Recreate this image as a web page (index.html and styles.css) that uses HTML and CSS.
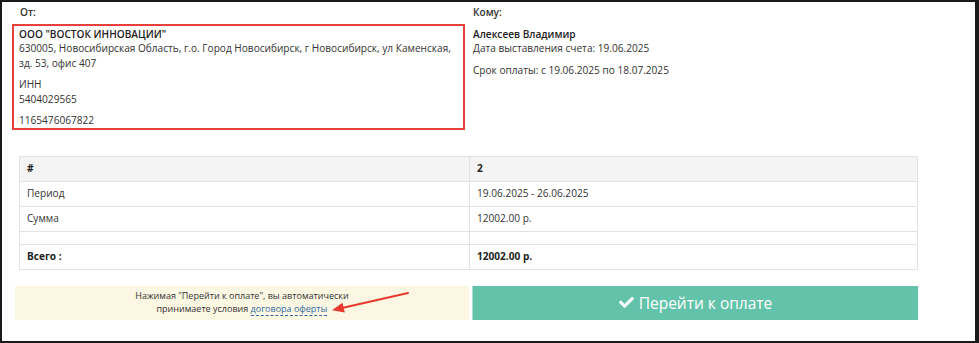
FILE: index.html
```html
<!DOCTYPE html>
<html lang="ru">
<head>
<meta charset="utf-8">
<title>Счет</title>
<link rel="stylesheet" href="styles.css">
</head>
<body>
<div class="frame">
  <div class="parties">
    <div class="party">
      <div class="label">От:</div>
      <div class="from-box">
        <div class="name">ООО "ВОСТОК ИННОВАЦИИ"</div>
        <p>630005, Новосибирская Область, г.о. Город Новосибирск, г Новосибирск, ул Каменская, зд. 53, офис 407</p>
        <p>ИНН<br>5404029565</p>
        <p class="last">1165476067822</p>
      </div>
    </div>
    <div class="party">
      <div class="label">Кому:</div>
      <div class="to-box">
        <div class="name">Алексеев Владимир</div>
        <p>Дата выставления счета: 19.06.2025</p>
        <p>Срок оплаты: с 19.06.2025 по 18.07.2025</p>
      </div>
    </div>
  </div>

  <table class="items">
    <tr class="head"><th>#</th><th>2</th></tr>
    <tr><td>Период</td><td>19.06.2025 - 26.06.2025</td></tr>
    <tr><td>Сумма</td><td>12002.00 р.</td></tr>
    <tr class="spacer"><td></td><td></td></tr>
    <tr class="total"><td>Всего :</td><td>12002.00 р.</td></tr>
  </table>

  <div class="pay-row">
    <div class="notice">
      Нажимая "Перейти к оплате", вы автоматически<br>
      принимаете условия <a class="offer" href="#">договора оферты</a>
      <svg class="arrow" width="82" height="26" viewBox="0 0 82 26">
        <line x1="78" y1="4" x2="12" y2="19" stroke="#e8382f" stroke-width="2" stroke-linecap="round"/>
        <polygon points="2,21.3 12.5,13.8 14.8,23.6" fill="#e8382f"/>
      </svg>
    </div>
    <button class="pay-btn">
      <svg class="check" width="15" height="12" viewBox="0 0 512 410"><path fill="#fff" d="M173.9 367.4L7.5 201c-10-10-10-26.2 0-36.2l36.2-36.2c10-10 26.2-10 36.2 0L192 240.7 432.1 0.6c10-10 26.2-10 36.2 0l36.2 36.2c10 10 10 26.2 0 36.2L210.1 367.4c-10 10-26.2 10-36.2 0z"/></svg>
      Перейти к оплате
    </button>
  </div>
</div>
</body>
</html>
```

FILE: styles.css
```css
* { box-sizing: border-box; }
html, body { margin: 0; padding: 0; background: #fff; }
body {
  font-family: "Open Sans", "Noto Sans", sans-serif;
  font-size: 10.1px;
  line-height: 14.5px;
  color: #333;
}
.frame {
  width: 979px;
  height: 343px;
  border-style: solid;
  border-color: #1a1a1a;
  border-width: 2px 4px 2px 2px;
  padding: 3px 0 0 10px;
}
.parties {
  display: grid;
  grid-template-columns: 453px 1fr;
  column-gap: 8px;
}
.label {
  font-weight: 600;
  padding-left: 8px;
  margin-bottom: 4px;
}
.party:last-child .label { padding-left: 0; }
.from-box {
  border: 2px solid #e8403a;
  padding: 1px 6px 0 5px;
}
.name { font-weight: 600; color: #222; }
p { margin: 0 0 7px; }
p.last { margin-bottom: 0; }
.to-box { padding-top: 3px; }

.items {
  border-collapse: collapse;
  width: 899px;
  margin: 26px 0 0 7px;
}
.items th, .items td {
  border: 1px solid #e3e3e3;
  padding: 0 8px 0 7px;
  text-align: left;
  height: 25px;
}
.items th:first-child, .items td:first-child { width: 450px; }
.items tr.head { background: #f4f4f4; }
.items th { font-weight: 700; color: #222; }
.items tr.spacer td { height: 13px; padding: 0; }
.items tr.total td { font-weight: 700; color: #222; }

.pay-row {
  display: flex;
  gap: 3px;
  margin: 16px 0 0 3px;
}
.notice {
  position: relative;
  width: 454px;
  height: 34px;
  background: #fcf7e3;
  text-align: center;
  padding-top: 3px;
  font-size: 9px;
  line-height: 13px;
}
.offer {
  color: #2d6aa0;
  text-decoration: none;
  border-bottom: 1px dashed #2d6aa0;
}
.arrow {
  position: absolute;
  left: 315px;
  top: 3px;
}
.pay-btn {
  width: 446px;
  height: 34px;
  background: #62c3aa;
  border: none;
  border-left: 1px solid #a6ddcf;
  color: #fff;
  font-family: "Open Sans", "Noto Sans", sans-serif;
  font-size: 15.5px;
  display: flex;
  align-items: center;
  justify-content: center;
  gap: 5px;
  padding: 0;
}
.check { display: block; }
```
